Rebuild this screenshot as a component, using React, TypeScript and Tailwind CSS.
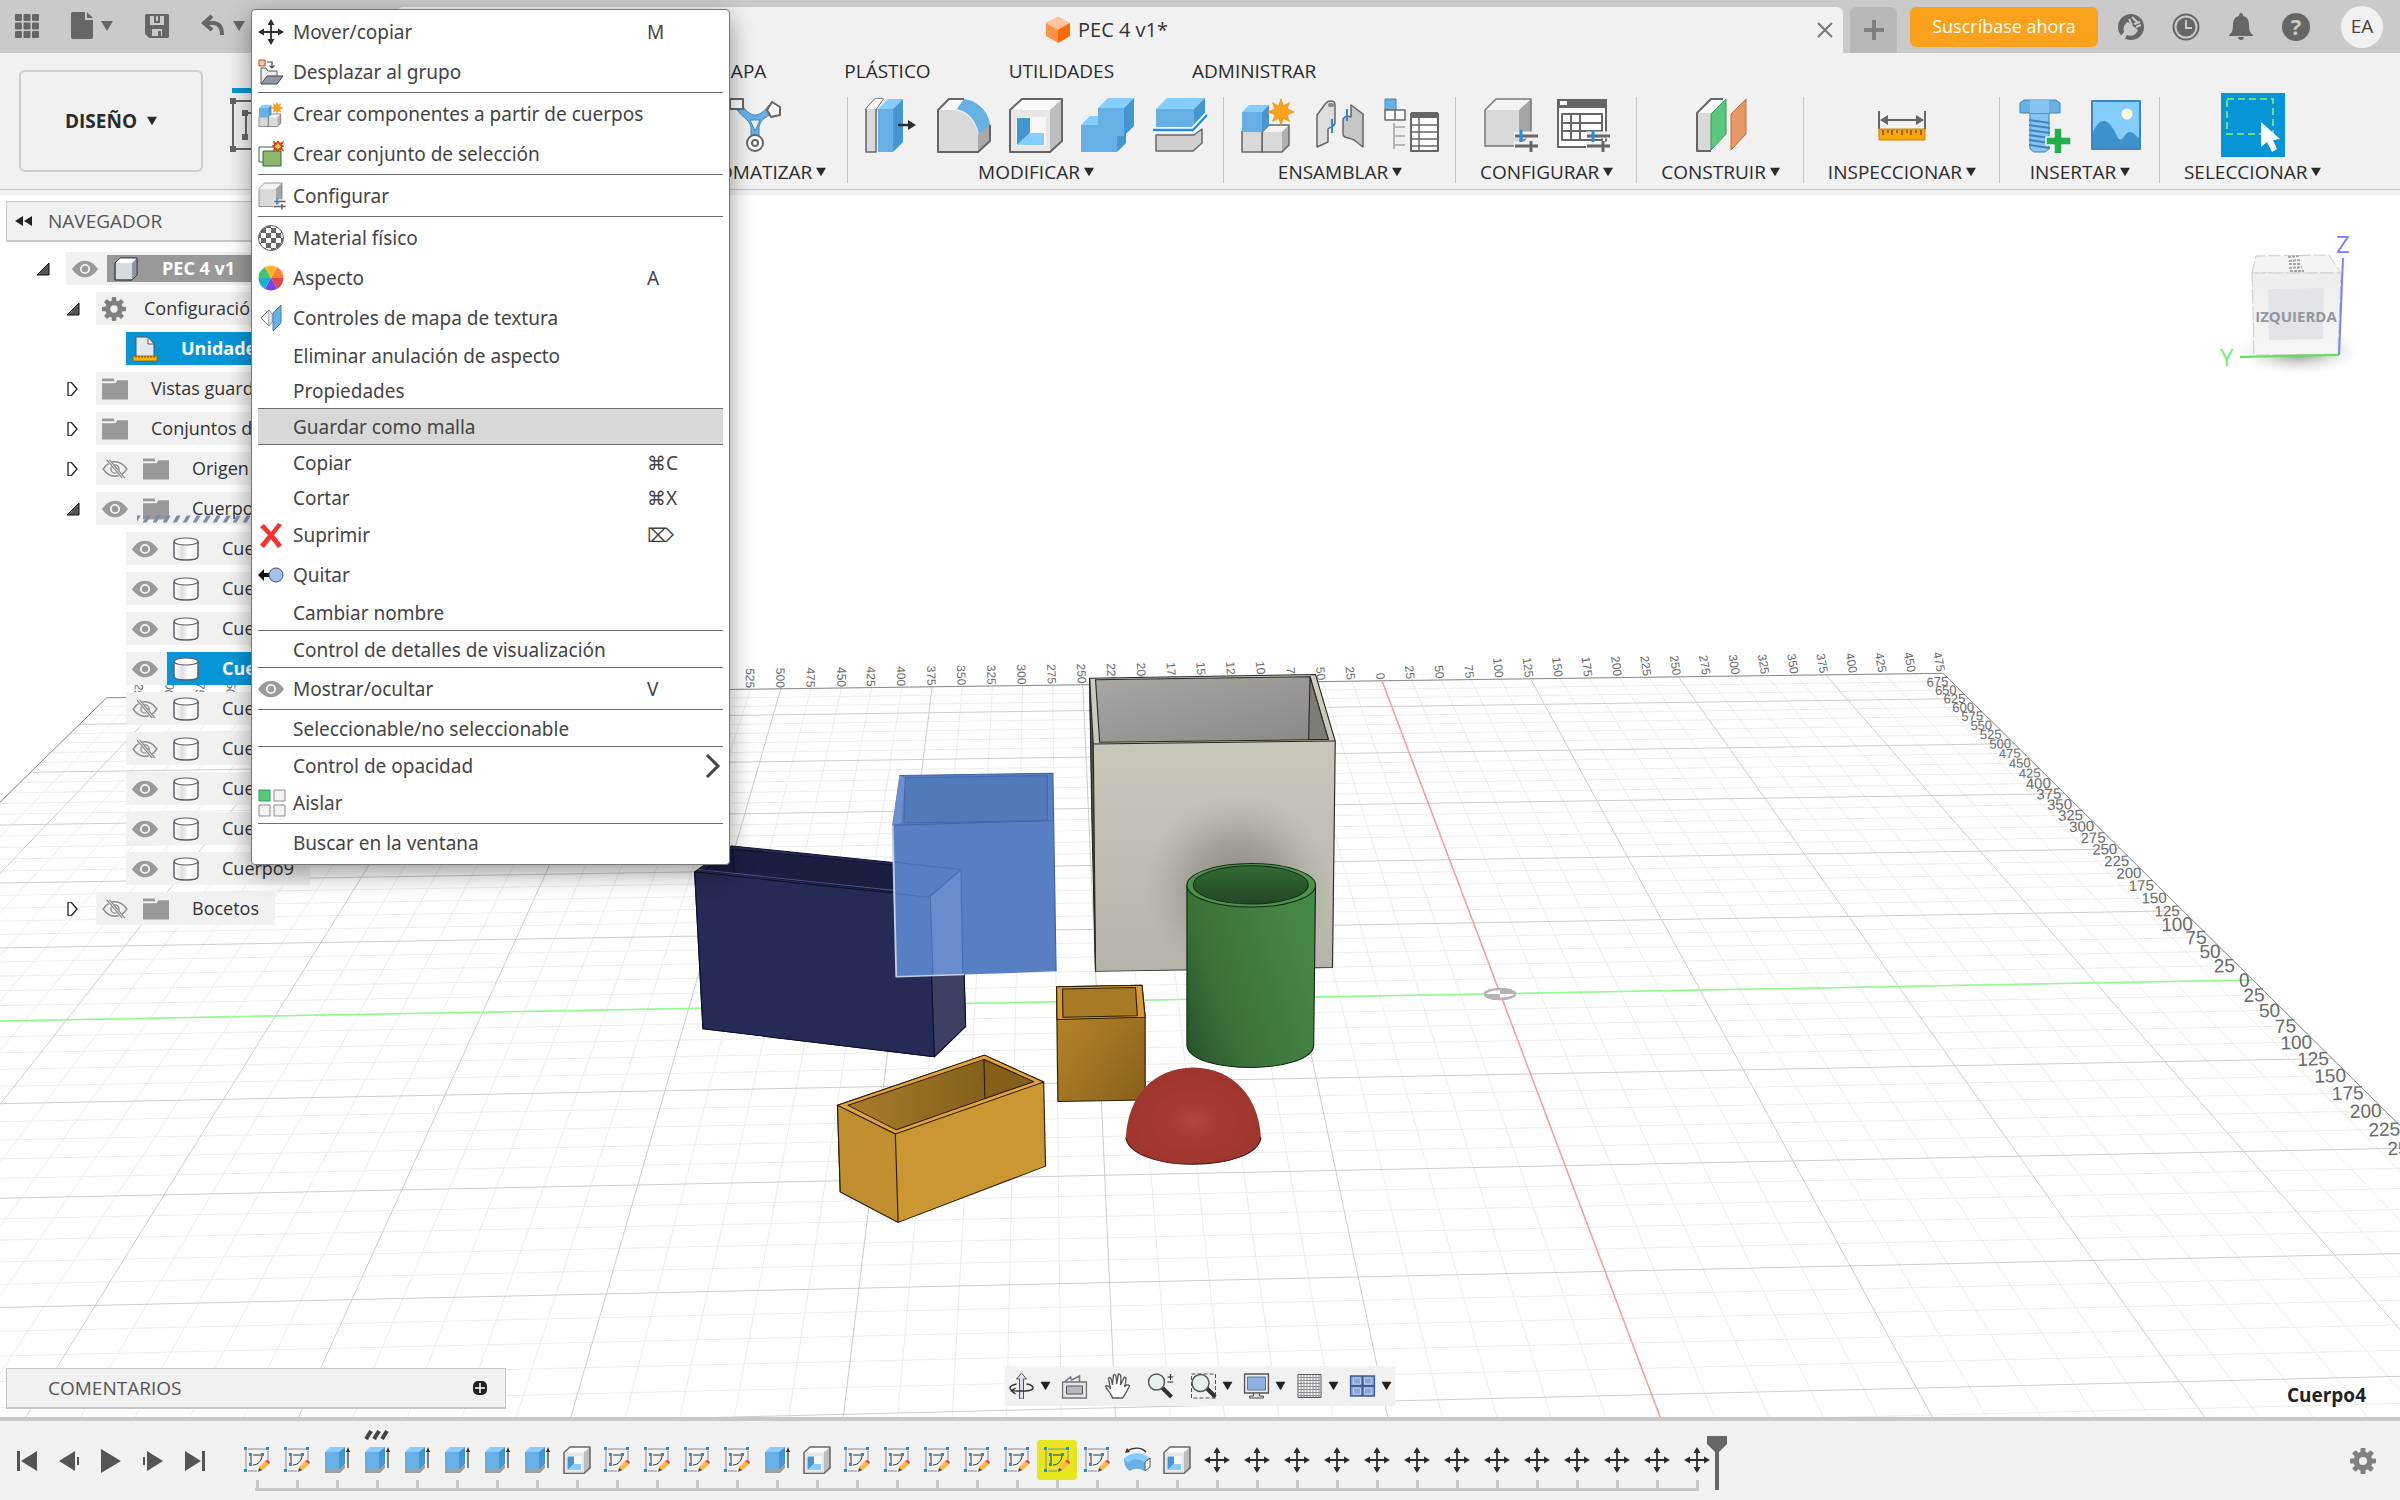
import type { ReactNode } from "react";

/* ---------- shared icon helpers ---------- */

const GREY = "#666666";
const BLUE = { top: "#85ccff", front: "#67b0e6", side: "#4496d0" };

const Caret = ({ className = "w-3 h-3" }: { className?: string }) => (
  <svg viewBox="0 0 12 12" className={className} aria-hidden="true">
    <path d="M0 1h12L6 11z" fill="currentColor" />
  </svg>
);

const Gear = ({ className = "w-6 h-6" }: { className?: string }) => (
  <svg viewBox="0 0 26 26" className={className} fill="#808080" aria-hidden="true">
    {[0, 45, 90, 135].map((a) => (
      <rect key={a} x="10.5" y="0" width="5" height="26" rx="1" transform={`rotate(${a} 13 13)`} />
    ))}
    <circle cx="13" cy="13" r="9.5" />
    <circle cx="13" cy="13" r="4" fill="#f1f1f1" />
  </svg>
);

const Eye = () => (
  <svg viewBox="0 0 28 18" className="w-[26px] h-[18px]" aria-hidden="true">
    <path d="M0 9C4 3 9 0 14 0s10 3 14 9c-4 6-9 9-14 9S4 15 0 9z" fill="#9a9a9a" />
    <circle cx="14" cy="9" r="4.5" fill="none" stroke="#f4f4f4" strokeWidth="2" />
  </svg>
);

const EyeOff = () => (
  <svg viewBox="0 0 28 22" className="w-[26px] h-[20px]" fill="none" stroke="#8c8c8c" strokeWidth="1.5" aria-hidden="true">
    <path d="M1 11C5 5 9.500 3 14 3s9 2 13 8c-4 6-8.500 8-13 8S5 17 1 11z" />
    <circle cx="14" cy="11" r="4.500" />
    <path d="M6 1l17 20" stroke="#f1f1f1" strokeWidth="4" />
    <path d="M5 1l17 20M8 1l17 20" />
  </svg>
);

const Folder = () => (
  <svg viewBox="0 0 27 22" className="w-[27px] h-[22px]" fill="#999" aria-hidden="true">
    <path d="M0 0h12l1 3H0zM0 5h14l2-3h11v20H0z" />
  </svg>
);

const Cylinder = () => (
  <svg viewBox="0 0 26 24" className="w-[26px] h-[24px]" aria-hidden="true">
    <defs>
      <linearGradient id="cyl">
        <stop offset="0" stopColor="#fff" />
        <stop offset=".35" stopColor="#dcdfe2" />
        <stop offset=".6" stopColor="#fff" />
        <stop offset="1" stopColor="#f2f2f2" />
      </linearGradient>
    </defs>
    <path d="M1 4.500v15C1 22 6 23 13 23s12-1 12-3.500v-15" fill="url(#cyl)" stroke="#5c5f6b" strokeWidth="1.500" />
    <ellipse cx="13" cy="4.500" rx="12" ry="3.500" fill="#fff" stroke="#5c5f6b" strokeWidth="1.200" />
  </svg>
);

const BoxIcon = () => (
  <svg viewBox="0 0 26 24" className="w-[26px] h-[24px]" stroke="#444" strokeLinejoin="round" aria-hidden="true">
    <path d="M2 6l5-5h17v17l-5 5H2z" fill="#d6dbe2" />
    <path d="M2 6l5-5h17l-5 5z" fill="#fff" stroke="none" />
    <path d="M19 6l5-5v17l-5 5z" fill="#8e96a3" stroke="none" />
    <path d="M2 6l5-5h17v17l-5 5H2z" fill="none" />
  </svg>
);

const UnitsIcon = () => (
  <svg viewBox="0 0 26 26" className="w-[26px] h-[26px]" aria-hidden="true">
    <path d="M4 1h12l6 7v14H4z" fill="#e4e7ec" stroke="#555" />
    <path d="M16 1v7h6z" fill="#fff" stroke="#555" />
    <rect x="1" y="20" width="24" height="5" fill="#f9b418" stroke="#8a5b00" strokeWidth=".800" />
    <path d="M4 20v2M7 20v2M10 20v2M13 20v2M16 20v2M19 20v2M22 20v2" stroke="#5a3b00" strokeWidth=".800" />
  </svg>
);

const MoveIcon = ({ className = "w-[26px] h-[26px]" }: { className?: string }) => (
  <svg viewBox="0 0 26 26" className={className} aria-hidden="true">
    <path d="M13 4v18M4 13h18" stroke="#2d2d2d" strokeWidth="1.800" />
    <path d="M13 0l3.500 6h-7zM13 26l3.500-6h-7zM0 13l6-3.500v7zM26 13l-6-3.500v7z" fill="#2d2d2d" />
  </svg>
);

const Star = ({ x, y, s }: { x: number; y: number; s: number }) => (
  <path
    transform={`translate(${x} ${y}) scale(${s})`}
    d="M0-14l2.500 7.500L9-10 6.500-3.500 14 0 6.500 3 9 10 2.500 6.500 0 14l-2.500-7.500L-9 10l2.500-7L-14 0l7.500-3.500L-9-10l6.500 3.500z"
    fill="#faa21b"
    stroke="#e58e00"
    strokeWidth=".600"
  />
);

/* ---------- ribbon icons, all on a 56 unit square ---------- */

const Ico = ({ children, className = "w-14 h-14" }: { children: ReactNode; className?: string }) => (
  <svg viewBox="0 0 56 56" className={className} fill="none" strokeLinejoin="round" aria-hidden="true">
    {children}
  </svg>
);

const BlueBlock = ({ x, y, w, h, d }: { x: number; y: number; w: number; h: number; d: number }) => (
  <g>
    <path d={`M${x} ${y + d}h${w}v${h}h${-w}z`} fill={BLUE.front} />
    <path d={`M${x} ${y + d}l${d}-${d}h${w}l${-d} ${d}z`} fill={BLUE.top} />
    <path d={`M${x + w} ${y + d}l${d}-${d}v${h}l${-d} ${d}z`} fill={BLUE.side} />
  </g>
);

const GreyBlock = ({ x, y, w, h, d }: { x: number; y: number; w: number; h: number; d: number }) => (
  <g>
    <path d={`M${x} ${y + d}h${w}v${h}h${-w}z`} fill="#d9d9d9" />
    <path d={`M${x} ${y + d}l${d}-${d}h${w}l${-d} ${d}z`} fill="#f5f5f5" />
    <path d={`M${x + w} ${y + d}l${d}-${d}v${h}l${-d} ${d}z`} fill="#b0b0b0" />
    <path d={`M${x} ${y + d}l${d}-${d}h${w}v${h}l${-d} ${d}h${-w}z`} stroke={GREY} strokeWidth="1.500" />
  </g>
);

const SketchRibbon = () => (
  <Ico>
    <path d="M4 6v44M4 4h50M4 52h50M17 18v22M17 16h30" stroke={GREY} strokeWidth="2" />
    <path d="M1 1h6v6H1zM1 49h6v6H1zM13 13h6v6h-6zM13 37h6v6h-6z" fill={GREY} />
  </Ico>
);

const Automate = () => (
  <Ico>
    <path d="M8 8c8 14 14 12 17 22v14h8V30c2-10 8-8 16-18l-6-4c-6 8-10 10-14 10S18 14 14 4z" fill="#67b0e6" stroke="#3e85bd" />
    <path d="M24 23h10l-5 11z" fill="#f1f1f1" stroke="#3e85bd" />
    <path d="M4 2h13v10H4z" fill="#fff" stroke={GREY} strokeWidth="2" />
    <path d="M46 5l8 5v8l-9 2-4-7z" fill="#fff" stroke={GREY} strokeWidth="2" />
    <circle cx="29" cy="46" r="8" fill="#fff" stroke={GREY} strokeWidth="2" />
    <circle cx="29" cy="46" r="3" fill="#fff" stroke={GREY} strokeWidth="2" />
  </Ico>
);

const PressPull = () => (
  <Ico>
    <path d="M2 12L11 2h8l-7 10v43H2z" fill="#d9d9d9" stroke={GREY} strokeWidth="1.500" />
    <path d="M2 12L11 2h8l-7 10z" fill="#fff" />
    <BlueBlock x={14} y={2} w={15} h={43} d={10} />
    <path d="M34 28h12" stroke="#2d2d2d" strokeWidth="2.500" />
    <path d="M44 23l8 5-8 5z" fill="#2d2d2d" />
  </Ico>
);

const Fillet = () => (
  <Ico>
    <path d="M2 13L13 2h14l-8 11z" fill="#f7f7f7" />
    <path d="M2 13h18c13 3 20 14 22 24v18H2z" fill="#d9d9d9" />
    <path d="M42 37l12-10v17L42 55z" fill="#a8a8a8" />
    <path d="M28 2c15 2 25 14 26 26L43 37C40 24 33 15 21 12z" fill="#67b0e6" />
    <path d="M28 2H13L2 13v42h40l12-11V28" stroke={GREY} strokeWidth="2" />
  </Ico>
);

const Shell = ({ className, line = 2 }: { className?: string; line?: number }) => (
  <Ico className={className}>
    <path d="M2 13h40v42H2z" fill="#e6e6e6" />
    <path d="M2 13L14 2h40L42 13z" fill="#fafafa" />
    <path d="M42 13L54 2v42L42 55z" fill="#bdbdbd" />
    <path d="M8 20h30v29H8z" fill="#f7f7f7" />
    <path d="M9 21h13v15L9 48z" fill={BLUE.side} />
    <path d="M22 36h14v12H9z" fill={BLUE.top} />
    <path d="M2 13L14 2h40v42L42 55H2z" stroke={GREY} strokeWidth={line} />
  </Ico>
);

const Combine = () => (
  <Ico>
    <BlueBlock x={1} y={19} w={36} h={27} d={9} />
    <BlueBlock x={18} y={1} w={26} h={28} d={10} />
    <path d="M1 29h36v26H1z" fill={BLUE.front} />
  </Ico>
);

const Split = () => (
  <Ico>
    <BlueBlock x={4} y={1} w={38} h={18} d={11} />
    <path d="M4 38h38l8-6v14l-9 8H4z" fill="#d0d0d0" stroke={GREY} strokeWidth="1.500" />
    <path d="M1 33h40l14-15" stroke="#fff" strokeWidth="6" />
    <path d="M1 33h40l14-15" stroke="#1a8fe3" strokeWidth="2.500" />
  </Ico>
);

const NewComponent = ({ className }: { className?: string }) => (
  <Ico className={className}>
    <GreyBlock x={22} y={28} w={20} h={20} d={7} />
    <path d="M2 34h20v21H2z" fill="#d9d9d9" stroke={GREY} strokeWidth="1.500" />
    <BlueBlock x={2} y={8} w={20} h={20} d={7} />
    <Star x={41} y={15} s={0.95} />
  </Ico>
);

const Joint = () => (
  <Ico>
    <path d="M5 18L14 6c3-3 9-3 9 2v18c-1 4-5 4-7 6v13L5 50z" fill="#dcdcdc" stroke={GREY} strokeWidth="1.500" />
    <path d="M51 50L42 43c-5-3-11-1-11-6V23c0-3 5-5 8-3V8l12 9z" fill="#c6c6c6" stroke={GREY} strokeWidth="1.500" />
    <ellipse cx="19" cy="8" rx="3" ry="2" fill="#888" />
    <path d="M20 22v14M35 12v12" stroke="#1a8fe3" strokeWidth="2" />
  </Ico>
);

const BomIcon = () => (
  <Ico>
    <path d="M1 2h11v11H1z" fill="#67b0e6" stroke="#3e85bd" />
    <path d="M1 13h10v10H1zM11 13h10v10H11z" fill="#fff" stroke={GREY} strokeWidth="1.500" />
    <path d="M10 26v26M10 30h11M10 39h11M10 48h11" stroke="#b5b5b5" strokeWidth="2" />
    <path d="M27 17h27v37H27z" fill="#fff" stroke={GREY} strokeWidth="2" />
    <path d="M27 15h27v6H27z" fill={GREY} />
    <path d="M35 21v33M27 28h27M27 35h27M27 42h27M27 49h27" stroke={GREY} strokeWidth="1.500" />
  </Ico>
);

const Sliders = () => (
  <g>
    <path d="M31 38h25M31 48h25" stroke="#f1f1f1" strokeWidth="7" />
    <path d="M32 39h23M32 49h23" stroke={GREY} strokeWidth="3" />
    <path d="M38 33v12" stroke="#1a8fe3" strokeWidth="3" />
    <path d="M48 44v11" stroke={GREY} strokeWidth="3" />
  </g>
);

const ConfigBox = ({ className }: { className?: string }) => (
  <Ico className={className}>
    <path d="M2 13h34v36H2z" fill="#d9d9d9" />
    <path d="M2 13L13 2h35L36 13z" fill="#f3f3f3" />
    <path d="M36 13L48 2v34L36 49z" fill="#a5a5a5" />
    <path d="M2 13L13 2h35v34L36 49H2z" stroke="#777" strokeWidth="1.500" />
    <Sliders />
  </Ico>
);

const ConfigTable = () => (
  <Ico>
    <path d="M3 3h48v47H3z" fill="#fff" stroke={GREY} strokeWidth="2" />
    <path d="M2 2h50v9H2z" fill={GREY} />
    <path d="M5 4h7v4H5z" fill="#fff" />
    <path d="M7 17h40v26H7zM7 26h40M7 34h40M16 17v26M25 17v26" stroke={GREY} strokeWidth="2" />
    <Sliders />
  </Ico>
);

const Planes = () => (
  <Ico>
    <path d="M4 16L18 2h14L18 16v38H4z" fill="#d9d9d9" />
    <path d="M4 16L18 2h14L18 16z" fill="#fff" />
    <path d="M30 2H18L4 16v38h14" stroke={GREY} strokeWidth="2" />
    <path d="M18 17L33 2v35L18 53z" fill="#59c77e" stroke="#2f9c55" />
    <path d="M38 17L53 2v35L38 53z" fill="#e59866" stroke="#bb7140" />
  </Ico>
);

const Measure = () => (
  <Ico>
    <path d="M5 14v18M51 14v18M7 23h42" stroke={GREY} strokeWidth="2" />
    <path d="M6 23l8-5v10zM50 23l-8-5v10z" fill={GREY} />
    <path d="M5 32h46v11H5z" fill="#faa60c" stroke="#c98300" />
    <path d="M9 33v5M14 33v3M18 33v5M23 33v3M28 33v5M33 33v3M37 33v5M42 33v3M47 33v5" stroke="#5a3b00" strokeWidth="1.200" />
  </Ico>
);

const Bolt = () => (
  <Ico>
    <path d="M14 16h19v36l-4 3H18l-4-3z" fill="#85c3f0" stroke="#3e85bd" />
    <path d="M13 23l21 3M13 28l21 3M13 33l21 3M13 38l21 3M13 43l21 3M13 48l21 3" stroke="#3e85bd" strokeWidth="2" />
    <path d="M4 6l4-3h32l4 3v10H4z" fill="#67b0e6" stroke="#3e85bd" />
    <path d="M14 3h19v13H14z" fill="#85c3f0" />
    <path d="M38 31h8v9h9v8h-9v9h-8v-9h-8v-8h8z" fill="#22b04b" stroke="#f1f1f1" strokeWidth="1.500" />
  </Ico>
);

const Picture = () => (
  <Ico>
    <path d="M4 4h48v48H4z" fill="#85ccff" />
    <path d="M4 37c8-18 16-18 26 4 5 6 6-6 12-6 4 0 6 4 10 7v10H4z" fill="#3d92cb" />
    <circle cx="39" cy="17" r="5.500" fill="#fffbd0" />
    <path d="M4 4h48v48H4z" stroke="#3e85bd" strokeWidth="2" />
  </Ico>
);

const SelectIcon = () => (
  <svg viewBox="0 0 64 64" className="w-16 h-16" aria-hidden="true">
    <path d="M0 0h64v64H0z" fill="#0696d7" />
    <path d="M6 6h46v35H6z" fill="none" stroke="#6fdc77" strokeWidth="2" strokeDasharray="7 4" />
    <path d="M40 29v25l6-5 5 10 5-3-4-9 7-1z" fill="#fff" />
  </svg>
);

/* ---------- context menu icons ---------- */

const MoveToGroup = () => (
  <svg viewBox="0 0 26 26" className="w-[26px] h-[26px]" fill="none" aria-hidden="true">
    <path d="M1 1h6v6H1z" fill="#f9c6a5" stroke="#a5532a" />
    <path d="M9 3h5v5M11.500 6.500L14 9l2.500-2.500" stroke="#444" strokeWidth="1.200" />
    <path d="M3 25V9h5l2 3h9v5" fill="#e9ecf1" stroke="#555" />
    <path d="M3 25l6-8h16l-6 8z" fill="#8f98a6" stroke="#444" />
  </svg>
);

const SelectionSet = () => (
  <svg viewBox="0 0 26 26" className="w-[26px] h-[26px]" aria-hidden="true">
    <path d="M1 6h18v15H1z" fill="#fff" stroke="#2e6b35" />
    <path d="M5 10h18v15H5z" fill="#8cb76b" stroke="#2e6b35" />
    <g transform="translate(20 5)">
      <path d="M0-5L1.500-2 4.500-3.500 3-.500 5 0 3 1.500 4.500 4 1.500 3 0 5-1.500 3-4 4-3 1.500-5 0-3-1-4-4-1.500-2z" fill="#ffd24a" stroke="#d4380d" strokeWidth="1.500" />
    </g>
  </svg>
);

const Checker = () => (
  <svg viewBox="0 0 26 26" className="w-[26px] h-[26px]" aria-hidden="true">
    <defs>
      <pattern id="check" width="10" height="10" x="-2" y="-2" patternUnits="userSpaceOnUse">
        <path d="M0 0h5v5H0zM5 5h5v5H5z" fill="#666" />
      </pattern>
    </defs>
    <circle cx="13" cy="13" r="12.500" fill="#fff" />
    <circle cx="13" cy="13" r="12.500" fill="url(#check)" stroke="#666" />
  </svg>
);

const wheel = ["#ffb52b", "#ff8235", "#e8444c", "#7441f0", "#1bb0c9", "#3fc66f"];

const ColorWheel = () => (
  <svg viewBox="-13 -13 26 26" className="w-[26px] h-[26px]" aria-hidden="true">
    {wheel.map((c, i) => (
      <path key={c} d="M0 0L-6.250-10.800A12.500 12.500 0 0 1 6.250-10.800z" fill={c} transform={`rotate(${i * 60})`} />
    ))}
  </svg>
);

const TextureMap = () => (
  <svg viewBox="0 0 26 26" className="w-[26px] h-[26px]" aria-hidden="true">
    <path d="M11 5v16l-8-8z" fill="#fff" stroke="#777" />
    <path d="M11 5l4 5v6l-4 5" fill="#ddd" stroke="#999" />
    <path d="M15 8l8-8v18l-8 8z" fill="#67b0e6" stroke="#3e85bd" />
  </svg>
);

const RedCross = () => (
  <svg viewBox="0 0 26 26" className="w-[26px] h-[26px]" aria-hidden="true">
    <path d="M2 5l4-3 7 8 7-9 4 2-8 10 8 10-4 3-7-9-7 9-4-3 8-10z" fill="#f8312f" />
  </svg>
);

const RemoveIcon = () => (
  <svg viewBox="0 0 26 26" className="w-[26px] h-[26px]" aria-hidden="true">
    <path d="M0 13l6-6v4h6v4H6v4z" fill="#111" />
    <circle cx="18" cy="13" r="7" fill="#a3c2ea" stroke="#40526e" />
  </svg>
);

const Isolate = () => (
  <svg viewBox="0 0 28 28" className="w-[28px] h-[28px]" fill="#f4f4f4" stroke="#888" aria-hidden="true">
    <path d="M1 1h11v11H1z" fill="#59c77e" stroke="#2f9c55" />
    <path d="M16 1h11v11H16zM1 16h11v11H1zM16 16h11v11H16z" />
  </svg>
);

/* ---------- timeline icons ---------- */

const SketchIcon = () => (
  <svg viewBox="0 0 26 26" className="w-[26px] h-[26px]" fill="none" aria-hidden="true">
    <path d="M2 3v20M4 2h18M24 4v10M4 24h9" stroke="#8a8a8a" />
    <path d="M7 9v8M9 8h8M18 8c0 6-4 10-9 10" stroke="#333" />
    <path d="M0 0h3v3H0zM22 0h3v3h-3zM0 22h3v3H0zM5 6h3v3H5zM17 6h3v3h-3zM5 16h3v3H5z" fill="#1a8fe3" />
    <path d="M15 20l6-6 4 3-6 6-4 1z" fill="#fdb94a" />
    <path d="M21 14l2-1 3 2-1 2z" fill="#f8312f" />
    <path d="M14 25l1-4 3 2z" fill="#444" />
  </svg>
);

const ExtrudeIcon = () => (
  <svg viewBox="0 0 26 26" className="w-[26px] h-[26px]" fill="none" aria-hidden="true">
    <path d="M1 22l5-4h15v3l-5 5H1z" fill="#a0a0a0" />
    <path d="M1 5h14v17H1z" fill={BLUE.front} />
    <path d="M1 5l5-5h15l-6 5z" fill={BLUE.top} />
    <path d="M15 5l6-5v17l-6 5z" fill={BLUE.side} />
    <path d="M24 3v18" stroke="#333" strokeWidth="1.200" />
    <path d="M24 0l2 5h-4z" fill="#333" />
  </svg>
);

const RevolveIcon = () => (
  <svg viewBox="0 0 28 26" className="w-[28px] h-[26px]" fill="none" aria-hidden="true">
    <path d="M1 12C6 6 18 4 26 11l-5 13c-4-3-10-3-14 0-3-2-6-5-6-12z" fill={BLUE.front} />
    <path d="M1 12C6 6 18 4 26 11l-4 5C17 11 8 12 5 16z" fill={BLUE.top} />
    <path d="M22 15l5-4v9l-5 4z" fill="#fff" stroke="#555" />
    <path d="M4 4c6-4 14-4 19 1" stroke="#333" strokeWidth="1.300" />
    <path d="M2 6l2-5 3 4z" fill="#333" />
  </svg>
);

/* ---------- context menu ---------- */

type MenuEntry = { label: string; icon?: ReactNode; key?: string; active?: boolean; more?: boolean } | "sep";

const menu: MenuEntry[] = [
  { label: "Mover/copiar", icon: <MoveIcon />, key: "M" },
  { label: "Desplazar al grupo", icon: <MoveToGroup /> },
  "sep",
  { label: "Crear componentes a partir de cuerpos", icon: <NewComponent className="w-[26px] h-[26px]" /> },
  { label: "Crear conjunto de selección", icon: <SelectionSet /> },
  "sep",
  { label: "Configurar", icon: <ConfigBox className="w-[28px] h-[28px]" /> },
  "sep",
  { label: "Material físico", icon: <Checker /> },
  { label: "Aspecto", icon: <ColorWheel />, key: "A" },
  { label: "Controles de mapa de textura", icon: <TextureMap /> },
  { label: "Eliminar anulación de aspecto" },
  { label: "Propiedades" },
  { label: "Guardar como malla", active: true },
  { label: "Copiar", key: "⌘C" },
  { label: "Cortar", key: "⌘X" },
  { label: "Suprimir", icon: <RedCross />, key: "⌦" },
  { label: "Quitar", icon: <RemoveIcon /> },
  { label: "Cambiar nombre" },
  "sep",
  { label: "Control de detalles de visualización" },
  "sep",
  { label: "Mostrar/ocultar", icon: <Eye />, key: "V" },
  "sep",
  { label: "Seleccionable/no seleccionable" },
  "sep",
  { label: "Control de opacidad", more: true },
  { label: "Aislar", icon: <Isolate /> },
  "sep",
  { label: "Buscar en la ventana" },
];

const ContextMenu = () => (
  <div
    role="menu"
    className="absolute left-[251px] top-[9px] z-20 w-[479px] rounded border border-[#777] bg-white px-1.5 pt-0.5 pb-1 text-[19px] text-[#444] shadow-[0_8px_24px_rgba(0,0,0,0.4)] font-['Noto_Sans','Open_Sans',sans-serif]"
  >
    {menu.map((m, i) => {
      if (m === "sep") return <hr key={i} className="mb-px border-t border-[#6e6e6e]" />;
      const size = m.icon ? "h-10" : m.active ? "h-[37px] border-y border-[#6e6e6e] bg-[#d8d8d8]" : "h-[35px]";
      return (
        <button key={i} role="menuitem" className={`flex w-full items-center text-left leading-6 ${size}`}>
          <span className="flex w-[28px] shrink-0 justify-start">{m.icon}</span>
          <span className="ml-[7px] flex-1 whitespace-nowrap">{m.label}</span>
          {m.key && <kbd className="w-[76px] font-['Noto_Sans','DejaVu_Sans',sans-serif]">{m.key}</kbd>}
          {m.more && (
            <svg viewBox="0 0 16 26" className="mr-0.5 h-[26px] w-4" fill="none" stroke="#444" strokeWidth="3" aria-hidden="true">
              <path d="M2 2l11 11L2 24" />
            </svg>
          )}
        </button>
      );
    })}
  </div>
);

/* ---------- top bar ---------- */

const TopBar = () => (
  <div className="flex h-[53px] bg-[#cacaca] text-[#666]">
    <div className="flex w-[397px] items-center pb-0.5 pl-[15px]">
      <button aria-label="Panel de datos">
        <svg viewBox="0 0 24 24" className="h-6 w-6" fill={GREY}>
          {[0, 8.500, 17].map((y) => [0, 8.500, 17].map((x) => <rect key={`${x}-${y}`} x={x} y={y} width="7" height="7" rx="1" />))}
        </svg>
      </button>
      <button aria-label="Archivo" className="ml-8 flex items-center gap-2">
        <svg viewBox="0 0 22 27" className="h-[27px] w-[22px]" fill={GREY}>
          <path d="M2 0h12v8h8v17a2 2 0 0 1-2 2H2a2 2 0 0 1-2-2V2a2 2 0 0 1 2-2zM16 0l6 6h-6z" />
        </svg>
        <Caret className="h-3 w-3" />
      </button>
      <button aria-label="Guardar" className="ml-8">
        <svg viewBox="0 0 24 24" className="h-6 w-6">
          <path d="M1 0h22l1 1v22l-1 1H4l-4-4V1z" fill={GREY} />
          <path d="M5 2h14v9H5zM7 15h10v7H7z" fill="#cacaca" />
          <path d="M9 2h6v7H9zM13 17h3v5h-3z" fill={GREY} />
          <path d="M11 2h2v5h-2z" fill="#cacaca" />
        </svg>
      </button>
      <button aria-label="Deshacer" className="ml-8 flex items-center gap-2">
        <svg viewBox="0 0 24 24" className="h-6 w-6" fill="none" stroke={GREY} strokeWidth="4">
          <path d="M11 2L3 9l8 7M4 9h8c6 0 9 4 9 12" />
        </svg>
        <Caret className="h-3 w-3" />
      </button>
    </div>
    <div className="mt-[7px] flex flex-1 items-center rounded-t-md bg-[#f1f1f1] pr-2.5">
      <div className="flex flex-1 items-center justify-center gap-2 text-[20px] text-[#333]">
        <svg viewBox="0 0 24 26" className="h-[26px] w-6">
          <path d="M12 0l12 6v13l-12 7-12-7V6z" fill="#ff9248" />
          <path d="M12 0l12 6-12 7L0 6z" fill="#ffc59c" />
          <path d="M12 13l12-7v13l-12 7z" fill="#ff6b00" />
        </svg>
        PEC 4 v1*
      </div>
      <button aria-label="Cerrar">
        <svg viewBox="0 0 16 16" className="h-4 w-4" stroke="#777" strokeWidth="2">
          <path d="M1 1l14 14M15 1L1 15" />
        </svg>
      </button>
    </div>
    <button aria-label="Nueva pestaña" className="ml-[7px] mt-[7px] flex w-[47px] items-center justify-center rounded-t-md bg-[#b8b8b8]">
      <svg viewBox="0 0 20 20" className="h-5 w-5" stroke="#808080" strokeWidth="4">
        <path d="M10 0v20M0 10h20" />
      </svg>
    </button>
    <div className="flex items-center gap-[27px] pr-[17px]">
      <a href="#suscribir" className="-mr-2 ml-[13px] flex h-10 w-[188px] items-center justify-center rounded-md bg-[#faa21b] text-[18px] text-white">
        Suscríbase ahora
      </a>
      <button aria-label="Extensiones">
        <svg viewBox="0 0 28 28" className="h-7 w-7">
          <circle cx="14" cy="14" r="13" fill={GREY} />
          <path d="M15 12l-3-6M20 9l-5-5M17 11l6-2M19 14l5-2" stroke="#cacaca" strokeWidth="2" />
          <path d="M11 9l10 8c-2 5-6 7-11 5l-3 5-4-3 4-5c-1-4 0-8 4-10z" fill="#cacaca" />
        </svg>
      </button>
      <button aria-label="Estado del trabajo">
        <svg viewBox="0 0 28 28" className="h-7 w-7" fill="none">
          <circle cx="14" cy="14" r="12.500" stroke={GREY} strokeWidth="2" />
          <circle cx="14" cy="14" r="9.500" fill={GREY} />
          <path d="M14 7v8h6" stroke="#cacaca" strokeWidth="2" />
        </svg>
      </button>
      <button aria-label="Notificaciones">
        <svg viewBox="0 0 28 28" className="h-7 w-7" fill={GREY}>
          <path d="M14 0c2 0 2 2 2 3 5 1 6 5 6 9 0 5 1 8 4 10v1H2v-1c3-2 4-5 4-10 0-4 1-8 6-9 0-1 0-3 2-3zM11 24h6c0 4-6 4-6 0z" />
        </svg>
      </button>
      <button aria-label="Ayuda" className="flex h-7 w-7 items-center justify-center rounded-full bg-[#666] text-[22px] font-bold text-[#cacaca]">
        ?
      </button>
      <button className="ml-1 flex h-[42px] w-[42px] items-center justify-center rounded-full bg-[#f1f1f1] text-[19px] text-[#444]">EA</button>
    </div>
  </div>
);

/* ---------- ribbon ---------- */

const tabs = ["SÓLIDO", "SUPERFICIE", "MALLA", "CHAPA", "PLÁSTICO", "UTILIDADES", "ADMINISTRAR"];

const groups = [
  { label: "AUTOMATIZAR", icons: [Automate] },
  { label: "MODIFICAR", icons: [PressPull, Fillet, Shell, Combine, Split] },
  { label: "ENSAMBLAR", icons: [NewComponent, Joint, BomIcon] },
  { label: "CONFIGURAR", icons: [ConfigBox, ConfigTable] },
  { label: "CONSTRUIR", icons: [Planes] },
  { label: "INSPECCIONAR", icons: [Measure] },
  { label: "INSERTAR", icons: [Bolt, Picture] },
  { label: "SELECCIONAR", icons: [SelectIcon] },
];

const Ribbon = () => (
  <div className="h-[142px] bg-[#f1f1f1] text-[19px] text-[#2b2b2b]">
    <div className="flex h-[137px] border-b border-[#c6c6c6]">
      <button className="ml-[19px] mt-[17px] flex h-[102px] w-[184px] shrink-0 items-center justify-center gap-2.5 rounded-md border-2 border-[#cdcdcd] font-bold">
        DISEÑO <Caret className="h-2.5 w-2.5" />
      </button>
      <div className="ml-5">
        <nav className="flex h-10 items-stretch gap-[78px] pl-[9px] leading-[37px]">
          {tabs.map((t, i) => (
            <a key={t} href="#tab" className={i === 0 ? "-mr-8 border-b-5 border-[#0696d7] px-5" : ""}>
              {t}
            </a>
          ))}
        </nav>
        <div className="flex">
          <div className="flex h-24 w-[437px] flex-col">
            <div className="flex h-16 items-center pl-1.5">
              <button aria-label="Crear boceto">
                <SketchRibbon />
              </button>
            </div>
            <button className="flex items-center justify-center gap-1 leading-[30px]">
              CREAR <Caret className="h-2.5 w-2.5" />
            </button>
          </div>
          {groups.map((g, i) => (
            <div key={g.label} className={`relative flex flex-col items-center ${i === 0 ? "w-[188px]" : ""}`}>
              <div className="flex h-16 items-center gap-4 px-4">
                {g.icons.map((Icon, k) => (
                  <button key={k} aria-label={`${g.label} ${k + 1}`}>
                    <Icon />
                  </button>
                ))}
              </div>
              <button className="flex items-center gap-1 whitespace-nowrap px-6 leading-[30px]">
                {g.label} <Caret className="h-2.5 w-2.5" />
              </button>
              {i < groups.length - 1 && <span className="absolute right-0 top-1 h-[86px] w-px bg-[#c4c4c4]" />}
            </div>
          ))}
        </div>
      </div>
    </div>
  </div>
);

/* ---------- model browser ---------- */

type Node = {
  label: string;
  level: 0 | 1 | 2;
  open?: boolean;
  eye?: "on" | "off";
  icon: ReactNode;
  look?: "root" | "blue";
  hatch?: boolean;
  tight?: boolean;
};

const bodies: Node[] = [1, 2, 3, 4, 5, 6, 7, 8, 9].map((n) => ({
  label: `Cuerpo${n}`,
  level: 2,
  eye: n === 5 || n === 6 ? "off" : "on",
  icon: <Cylinder />,
  look: n === 4 ? "blue" : undefined,
}));

const tree: Node[] = [
  { label: "PEC 4 v1", level: 0, open: true, eye: "on", icon: <BoxIcon />, look: "root" },
  { label: "Configuración de documento", level: 1, open: true, icon: <Gear className="h-6 w-6" />, tight: true },
  { label: "Unidades: mm", level: 2, icon: <UnitsIcon />, look: "blue" },
  { label: "Vistas guardadas", level: 1, open: false, icon: <Folder /> },
  { label: "Conjuntos de selección", level: 1, open: false, icon: <Folder /> },
  { label: "Origen", level: 1, open: false, eye: "off", icon: <Folder /> },
  { label: "Cuerpos", level: 1, open: true, eye: "on", icon: <Folder />, hatch: true },
  ...bodies,
  { label: "Bocetos", level: 1, open: false, eye: "off", icon: <Folder /> },
];

const indent = ["pl-0", "pl-[30px]", "pl-[60px]"];

const look = {
  root: "h-[27px] bg-[#999] font-bold text-white",
  blue: "h-[33px] bg-[#0696d7] font-bold text-white",
};

const TreeRow = ({ node }: { node: Node }) => (
  <li className={`mb-[7px] flex h-[33px] items-center ${indent[node.level]}`}>
    <span className="w-[30px]">
      {node.open !== undefined && (
        <button aria-label={node.label} className="block">
          <svg viewBox="0 0 14 14" className="h-3.5 w-3.5">
            {node.open ? <path d="M13 1v12H1z" fill="#555" stroke="#111" /> : <path d="M2 0h3l6 7-6 7H2z" fill="#fff" stroke="#222" strokeWidth="1.300" />}
          </svg>
        </button>
      )}
    </span>
    <div className="relative flex h-[33px] items-center bg-[#f1f1f1]">
      {node.eye && <span className="flex w-[41px] pl-1.5">{node.eye === "on" ? <Eye /> : <EyeOff />}</span>}
      <button className={`flex items-center pl-1.5 pr-4 ${node.look ? look[node.look] : "h-[33px]"}`}>
        <span className="flex w-[26px]">{node.icon}</span>
        <span className={`whitespace-nowrap ${node.tight ? "ml-4" : "ml-[23px]"}`}>{node.label}</span>
      </button>
      {node.hatch && (
        <svg className="absolute bottom-0.5 left-[41px] h-2 w-[130px]" aria-hidden="true">
          <path d="M0 4h130" stroke="#7d8bab" strokeWidth="7" strokeDasharray="4 6" transform="skewX(-30)" />
        </svg>
      )}
    </div>
  </li>
);

const Browser = () => (
  <aside className="absolute left-1.5 top-1.5 w-[500px] text-[18px] text-[#333]">
    <div className="flex h-[41px] items-center border border-b-2 border-[#c8c8c8] bg-[#f1f1f1] text-[19px] text-[#555]">
      <button aria-label="Contraer" className="ml-2">
        <svg viewBox="0 0 17 10" className="h-2.5 w-[17px]" fill="#222">
          <path d="M8 0v10L0 5zM17 0v10L9 5z" />
        </svg>
      </button>
      <span className="ml-4">NAVEGADOR</span>
    </div>
    <ul className="ml-[30px] mt-2.5">
      {tree.map((n) => (
        <TreeRow key={n.label} node={n} />
      ))}
    </ul>
  </aside>
);

/* ---------- 3D viewport ---------- */

// ground plane (mm) to screen
const project = (u: number, v: number): [number, number] => {
  const w = 1 + 0.0000246 * u + 0.0004971 * v;
  return [(1.64 * u + 0.51814 * v + 1500.2) / w, (-0.0047 * u - 0.10857 * v + 993.7) / w];
};

const seg = (a: [number, number], b: [number, number]) => `M${a[0].toFixed(1)} ${a[1].toFixed(1)}L${b[0].toFixed(1)} ${b[1].toFixed(1)}`;

const range = (from: number, to: number) => Array.from({ length: (to - from) / 25 + 1 }, (_, i) => from + i * 25);

const U = range(-1050, 475);
const V = range(-750, 700);
const across = (v: number) => seg(project(-1050, v), project(475, v));
const along = (u: number) => seg(project(u, -750), project(u, 700));
const minor = [...V.filter((v) => v % 125 !== 0).map(across), ...U.filter((u) => u % 125 !== 0).map(along)].join("");
const major = [...V.filter((v) => v % 125 === 0).map(across), ...U.filter((u) => u % 125 === 0).map(along)].join("");

const Scene = () => (
  <svg viewBox="0 195 2400 1222" preserveAspectRatio="xMinYMin slice" className="absolute inset-0 h-full w-full" aria-hidden="true">
    <defs>
      <linearGradient id="greyWall" x1="0" y1="0" x2="0" y2="1">
        <stop offset="0" stopColor="#cfccc0" />
        <stop offset=".35" stopColor="#c6c4b7" />
        <stop offset="1" stopColor="#b6b3aa" />
      </linearGradient>
      <radialGradient id="shade">
        <stop offset="0" stopColor="#77746f" stopOpacity=".75" />
        <stop offset=".5" stopColor="#85827c" stopOpacity=".5" />
        <stop offset="1" stopColor="#a5a299" stopOpacity="0" />
      </radialGradient>
      <linearGradient id="greyIn" x1="0" y1="0" x2="1" y2="1">
        <stop offset="0" stopColor="#a9a7a1" />
        <stop offset="1" stopColor="#8b8883" />
      </linearGradient>
      <linearGradient id="green" x1="0" y1="1" x2="1" y2=".5">
        <stop offset="0" stopColor="#27502a" />
        <stop offset=".35" stopColor="#3a7038" />
        <stop offset="1" stopColor="#478745" />
      </linearGradient>
      <linearGradient id="greenIn" x1="0" y1="0" x2="0" y2="1">
        <stop offset="0" stopColor="#336b35" />
        <stop offset="1" stopColor="#234626" />
      </linearGradient>
      <radialGradient id="red" cx=".5" cy=".55" r=".6">
        <stop offset="0" stopColor="#b5463d" />
        <stop offset=".3" stopColor="#aa3a31" />
        <stop offset="1" stopColor="#9a352d" />
      </radialGradient>
      <linearGradient id="ochreSmall" x1="0" y1="0" x2="1" y2="1">
        <stop offset="0" stopColor="#b98628" />
        <stop offset=".4" stopColor="#a87a24" />
        <stop offset="1" stopColor="#87601c" />
      </linearGradient>
      <linearGradient id="ochreIn">
        <stop offset="0" stopColor="#a97c29" />
        <stop offset="1" stopColor="#765617" />
      </linearGradient>
    </defs>

    <path d={minor} stroke="#ececec" fill="none" />
    <path d={major} stroke="#cdcdcd" fill="none" />
    <path d={seg(project(-1050, 700), project(475, 700)) + seg(project(475, 700), project(475, -750)) + seg(project(-1050, 700), project(-1050, -750))} stroke="#8a8a8a" fill="none" />
    <path d={seg(project(-1050, 0), project(475, 0))} stroke="#8dff8d" strokeWidth="1.500" />
    <path d={seg(project(0, -750), project(0, 700))} stroke="#ff9c9c" strokeWidth="1.500" />

    <g fill="#6a6a6a" fontFamily="'Liberation Sans', sans-serif">
      {U.filter((u) => u > -1050).map((u) => {
        const [x, y] = project(u, 703);
        const lean = 90 - (u + 450) / 80;
        return (
          <text key={u} transform={`translate(${x - 5} ${y}) rotate(${lean})`} textAnchor="end" fontSize="12">
            {Math.abs(u)}
          </text>
        );
      })}
      {V.filter((v) => v > -275 && v < 700).map((v) => {
        const [x, y] = project(475, v);
        const size = v > 400 ? 13 : v > 100 ? 15 : 19;
        return (
          <text key={v} transform={`translate(${x - 3} ${y + size / 3}) rotate(-2)`} textAnchor="end" fontSize={size}>
            {Math.abs(v)}
          </text>
        );
      })}
    </g>

    {/* origin marker */}
    <ellipse cx="1500" cy="994" rx="15" ry="5" fill="#fff" stroke="#b4b4b4" strokeWidth="2.500" />
    <path d="M1500 994v-6c9 0 15 2 15 6zM1500 994v6c-9 0-15-2-15-6z" fill="#b4b4b4" />

    {/* bodies */}
    <g transform="translate(680 640) scale(.45918 .38265)" strokeLinejoin="round" strokeWidth="2.500">
      <g stroke="#2a2a26">
        <path d="M892 100l492-10 43 174-6 592-516 10z" fill="url(#greyWall)" />
        <path d="M905 104l467-8 40 164-498 7z" fill="url(#greyIn)" />
        <path d="M1372 96l40 164h-43z" fill="#7f7c77" />
        <path d="M892 100l8 172 5 594-8-400z" fill="#55534e" />
        <path d="M900 272l527-8" />
      </g>
      <ellipse cx="1215" cy="650" rx="205" ry="250" fill="url(#shade)" />

      <g stroke="#101028">
        <path d="M32 606l80-68 500 62 10 410-68 79L50 1016z" fill="#262a56" />
        <path d="M52 602l62-56 486 58-58 64z" fill="#1b1e40" />
        <path d="M114 546l4 62" />
        <path d="M32 606l510 66 70-72 10 410-68 79z" fill="#3d3f63" />
        <path d="M32 606l510 66 12 417L50 1016z" fill="#262a56" />
        <path d="M40 600l500 64" stroke="#565a86" />
      </g>

      <g>
        <path d="M478 354l334-6 7 518-348 14-9-396z" fill="#587ec3" />
        <path d="M490 360l310-6v118l-312 6z" fill="#5279b8" stroke="#4468a8" />
        <path d="M478 354l12 6-8 118-19 6z" fill="#6c8fd0" />
        <path d="M545 672l67-70 4 270-66 6z" fill="#688cce" />
        <path d="M463 580l149 20-70 72-79-10M545 672l6 206M612 602l4 270" fill="none" stroke="#4a6db0" />
        <path d="M463 484l349-12M478 354l334-6 7 518" fill="none" stroke="#4163a5" />
        <path d="M463 484l8 396 148-6" fill="none" stroke="#c5cfe4" strokeWidth="4" />
      </g>

      <g stroke="#2b1f06">
        <path d="M820 906l186-4 7 84v216l-190 4z" fill="url(#ochreSmall)" />
        <path d="M820 906l186-4 7 84-192 6z" fill="#d99a35" />
        <path d="M833 912l159-4 4 74-162 4z" fill="#a97a24" />
      </g>

      <g stroke="#122a14">
        <path d="M1104 640v420c4 38 70 57 140 57s134-22 136-57l4-420z" fill="url(#green)" />
        <ellipse cx="1244" cy="641" rx="140" ry="57" fill="#4d924b" />
        <ellipse cx="1243" cy="640" rx="125" ry="50" fill="url(#greenIn)" />
      </g>

      <path d="M971 1300c4-110 62-182 146-183 90 1 144 80 148 183-4 44-70 70-150 70s-140-30-144-70z" fill="url(#red)" />
      <path d="M971 1300c4 40 64 70 144 70s146-26 150-70" fill="none" stroke="#3a100d" />

      <g stroke="#2b1f06">
        <path d="M343 1216l320-131 129 70 4 220-321 147-126-80z" fill="#cb9732" />
        <path d="M343 1216l320-131 129 70-323 136z" fill="#e3a43c" />
        <path d="M366 1216l296-120 108 58-299 126z" fill="url(#ochreIn)" />
        <path d="M662 1096l108 58-106 44z" fill="#846019" />
        <path d="M343 1216l126 75 6 231-126-80z" fill="#c08f30" />
      </g>
    </g>
  </svg>
);

const ViewCube = () => (
  <svg viewBox="0 0 220 180" className="absolute right-0 top-[15px] h-[180px] w-[220px]" fontFamily="'Open Sans', sans-serif">
    <defs>
      <linearGradient id="cubeFace" x1="0" y1="0" x2="0" y2="1">
        <stop offset="0" stopColor="#ededee" />
        <stop offset="1" stopColor="#f6f6f6" />
      </linearGradient>
      <radialGradient id="cubeShadow">
        <stop offset="0" stopColor="#666" />
        <stop offset="1" stopColor="#fff" stopOpacity="0" />
      </radialGradient>
    </defs>
    <ellipse cx="118" cy="141" rx="68" ry="26" fill="url(#cubeShadow)" opacity=".9" />
    <path d="M72 63l4-17 73-1 12 18z" fill="#f4f4f4" stroke="#ccc" strokeDasharray="12 3" />
    <path d="M72 63h89l-3 81-84 1z" fill="url(#cubeFace)" stroke="#ccc" strokeDasharray="14 3" />
    <path d="M88 79l56-1-1 51-54 1z" fill="#e2e4e8" />
    <text x="116" y="112" textAnchor="middle" fontSize="15" fontWeight="700" fill="#9297a0">
      IZQUIERDA
    </text>
    <g stroke="#a3a6ad" strokeWidth="2">
      <path d="M108 47l12-1M109 51l11-1M109 54h12M109 58l13-1M110 61h14" strokeDasharray="3 1" />
    </g>
    <path d="M163 48l-4 97" stroke="#8080ff" strokeWidth="2" />
    <path d="M60 147l99-2" stroke="#53e553" strokeWidth="2" />
    <text x="156" y="43" fontSize="24" fill="#8080ff">
      Z
    </text>
    <text x="40" y="156" fontSize="24" fill="#6cf06c">
      Y
    </text>
  </svg>
);

/* ---------- navigation bar ---------- */

const Nav = ({ label, drop, children }: { label: string; drop?: boolean; children: ReactNode }) => (
  <button aria-label={label} className="flex items-center gap-1.5 text-[#222]">
    <svg viewBox="0 0 26 26" className="h-[26px] w-[26px]" fill="none" stroke="#555" aria-hidden="true">
      {children}
    </svg>
    {drop ? <Caret className="h-2.5 w-2.5" /> : <span />}
  </button>
);

const NavBar = () => (
  <div className="absolute bottom-[11px] left-1/2 flex h-10 -translate-x-1/2 items-center gap-[11px] bg-[#f1f1f1] px-1">
    <Nav label="Órbita" drop>
      <path d="M11 26V6H8l5-6 5 6h-3v20z" fill="#dde" />
      <path d="M8 11c-9 2-9 7 2 7h6c11 0 11-6 2-7M7 15l-4 3 4 3" stroke="#333" strokeWidth="1.500" />
    </Nav>
    <Nav label="Mirar a">
      <path d="M1 9h24v16H1zM3 9l6-5 1 3 8-4v6" fill="#e3e5e8" stroke="#777" strokeWidth="1.500" />
      <path d="M5 13h16v8H5z" fill="#b4b8c0" />
    </Nav>
    <Nav label="Encuadre">
      <path d="M8 25c-1-5-6-8-7-12 2-1 4 1 5 3L4 5c2-1 3 0 4 7L9 2c2-1 3 0 3 9l2-10c2 0 3 1 2 11l4-8c2 0 2 2 0 10 1-2 4-3 5-1-3 5-4 9-7 12z" fill="#fff" strokeWidth="1.300" />
    </Nav>
    <Nav label="Zoom">
      <path d="M15 15l9 9" stroke="#333" strokeWidth="4" />
      <circle cx="9" cy="9" r="8" fill="#e9f1f0" strokeWidth="1.500" />
      <path d="M20 4h6M23 1v6M20 9h6" stroke="#222" />
    </Nav>
    <Nav label="Ventana de zoom" drop>
      <path d="M1 1h24v24H1z" strokeDasharray="4 2" />
      <path d="M16 15l9 9" stroke="#333" strokeWidth="4" />
      <circle cx="10" cy="10" r="8.500" fill="#e9f1f0" strokeWidth="1.500" />
    </Nav>
    <Nav label="Configuración de visualización" drop>
      <path d="M1 1h24v19H1z" fill="#eee" strokeWidth="1.500" />
      <path d="M4 4h18v13H4z" fill="#8db2e2" stroke="#5375a8" />
      <path d="M10 20h6v3h4v2H6v-2h4z" fill="#ddd" />
    </Nav>
    <Nav label="Rejilla y ajustes" drop>
      <path d="M1.500 1.500h23v23h-23z" fill="#fff" />
      <path d="M4.500 2v22M7.500 2v22M10.500 2v22M13.500 2v22M16.500 2v22M19.500 2v22M22.500 2v22M2 4.500h22M2 7.500h22M2 10.500h22M2 13.500h22M2 16.500h22M2 19.500h22M2 22.500h22" stroke="#8c8c96" />
    </Nav>
    <Nav label="Ventanas gráficas" drop>
      <path d="M1 3h24v20H1z" fill="#86a7d6" stroke="#3f5d91" strokeWidth="1.500" />
      <path d="M13 3v20M1 13h24" stroke="#3f5d91" strokeWidth="2" />
      <path d="M4 5h7v6H4zM15 5h7v6h-7zM4 15h7v6H4zM15 15h7v6h-7z" stroke="#b9cdec" />
    </Nav>
  </div>
);

/* ---------- timeline ---------- */

// s sketch, e extrude, h shell, y highlighted sketch, r revolve, m move
const steps = "sseeeeeehsssseh" + "sssssysrh" + "mmmmmmmmmmmmm";

const stepIcon: Record<string, ReactNode> = {
  s: <SketchIcon />,
  y: <SketchIcon />,
  e: <ExtrudeIcon />,
  h: <Shell className="h-[28px] w-[28px]" line={3} />,
  r: <RevolveIcon />,
  m: <MoveIcon />,
};

const playback = [
  { label: "Ir al principio", box: "0 0 20 20", d: "M0 0h3v20H0zM20 0v20L4 10z" },
  { label: "Paso atrás", box: "0 0 20 20", d: "M16 0v20L0 10zM18 6h2v8h-2z" },
  { label: "Reproducir", box: "0 0 20 24", d: "M0 0l20 12L0 24z" },
  { label: "Paso adelante", box: "0 0 20 20", d: "M4 0v20l16-10zM0 6h2v8H0z" },
  { label: "Ir al final", box: "0 0 20 20", d: "M17 0h3v20h-3zM0 0v20l16-10z" },
];

const Timeline = () => (
  <footer className="flex h-[83px] border-t-4 border-[#c8c8c8] bg-[#f1f1f1]">
    <div className="mt-[26px] flex h-7 items-center gap-[22px] pl-[17px]">
      {playback.map((p) => (
        <button key={p.label} aria-label={p.label}>
          <svg viewBox={p.box} className={p.label === "Reproducir" ? "h-6 w-5" : "h-5 w-5"} fill="#555">
            <path d={p.d} />
          </svg>
        </button>
      ))}
    </div>
    <ol className="ml-8 mt-[19px] flex">
      {[...steps].map((s, i) => (
        <li key={i} className="relative flex w-10 flex-col items-center">
          {i === 3 && (
            <svg viewBox="0 0 26 10" className="absolute -top-2.5 h-2.5 w-[26px]" stroke="#444" strokeWidth="4" aria-hidden="true">
              <path d="M2 9l5-8M10 9l5-8M18 9l5-8" />
            </svg>
          )}
          <button aria-label={`Operación ${i + 1}`} className={`flex h-10 w-10 items-center justify-center ${s === "y" ? "rounded bg-[#e5e520]" : ""}`}>
            {stepIcon[s]}
          </button>
          <span className="h-2 w-[3px] bg-[#c8c8c8]" />
          <span className={`h-[3px] bg-[#c8c8c8] ${i === 0 ? "w-[22px] self-end" : i === steps.length - 1 ? "w-[22px] self-start" : "w-full"}`} />
        </li>
      ))}
    </ol>
    <svg viewBox="0 0 20 54" className="-ml-2.5 mt-[15px] h-[54px] w-5" fill={GREY} aria-hidden="true">
      <path d="M0 0h20v8l-8 8v38H8V16L0 8z" />
    </svg>
    <button aria-label="Preferencias" className="ml-auto mr-6 mt-[27px] h-[26px]">
      <Gear className="h-[26px] w-[26px]" />
    </button>
  </footer>
);

export default function App() {
  return (
    <div className="relative flex h-screen min-h-[900px] flex-col overflow-hidden bg-white font-['Open_Sans','Noto_Sans',sans-serif]">
      <header>
        <TopBar />
        <Ribbon />
      </header>
      <main className="relative flex-1 overflow-hidden">
        <Scene />
        <ViewCube />
        <Browser />
        <section className="absolute bottom-2 left-1.5 flex h-[41px] w-[500px] items-center justify-between border border-b-2 border-[#c8c8c8] bg-[#f1f1f1] pl-[41px] pr-[18px] text-[19px] text-[#555]">
          COMENTARIOS
          <button aria-label="Añadir comentario">
            <svg viewBox="0 0 14 14" className="h-3.5 w-3.5">
              <rect width="14" height="14" rx="5" fill="#222" />
              <path d="M7 2v10M2 7h10" stroke="#fff" strokeWidth="1.500" />
            </svg>
          </button>
        </section>
        <NavBar />
        <p className="absolute bottom-2.5 right-[34px] text-[19px] font-bold leading-6 text-[#222]">Cuerpo4</p>
      </main>
      <Timeline />
      <ContextMenu />
    </div>
  );
}
